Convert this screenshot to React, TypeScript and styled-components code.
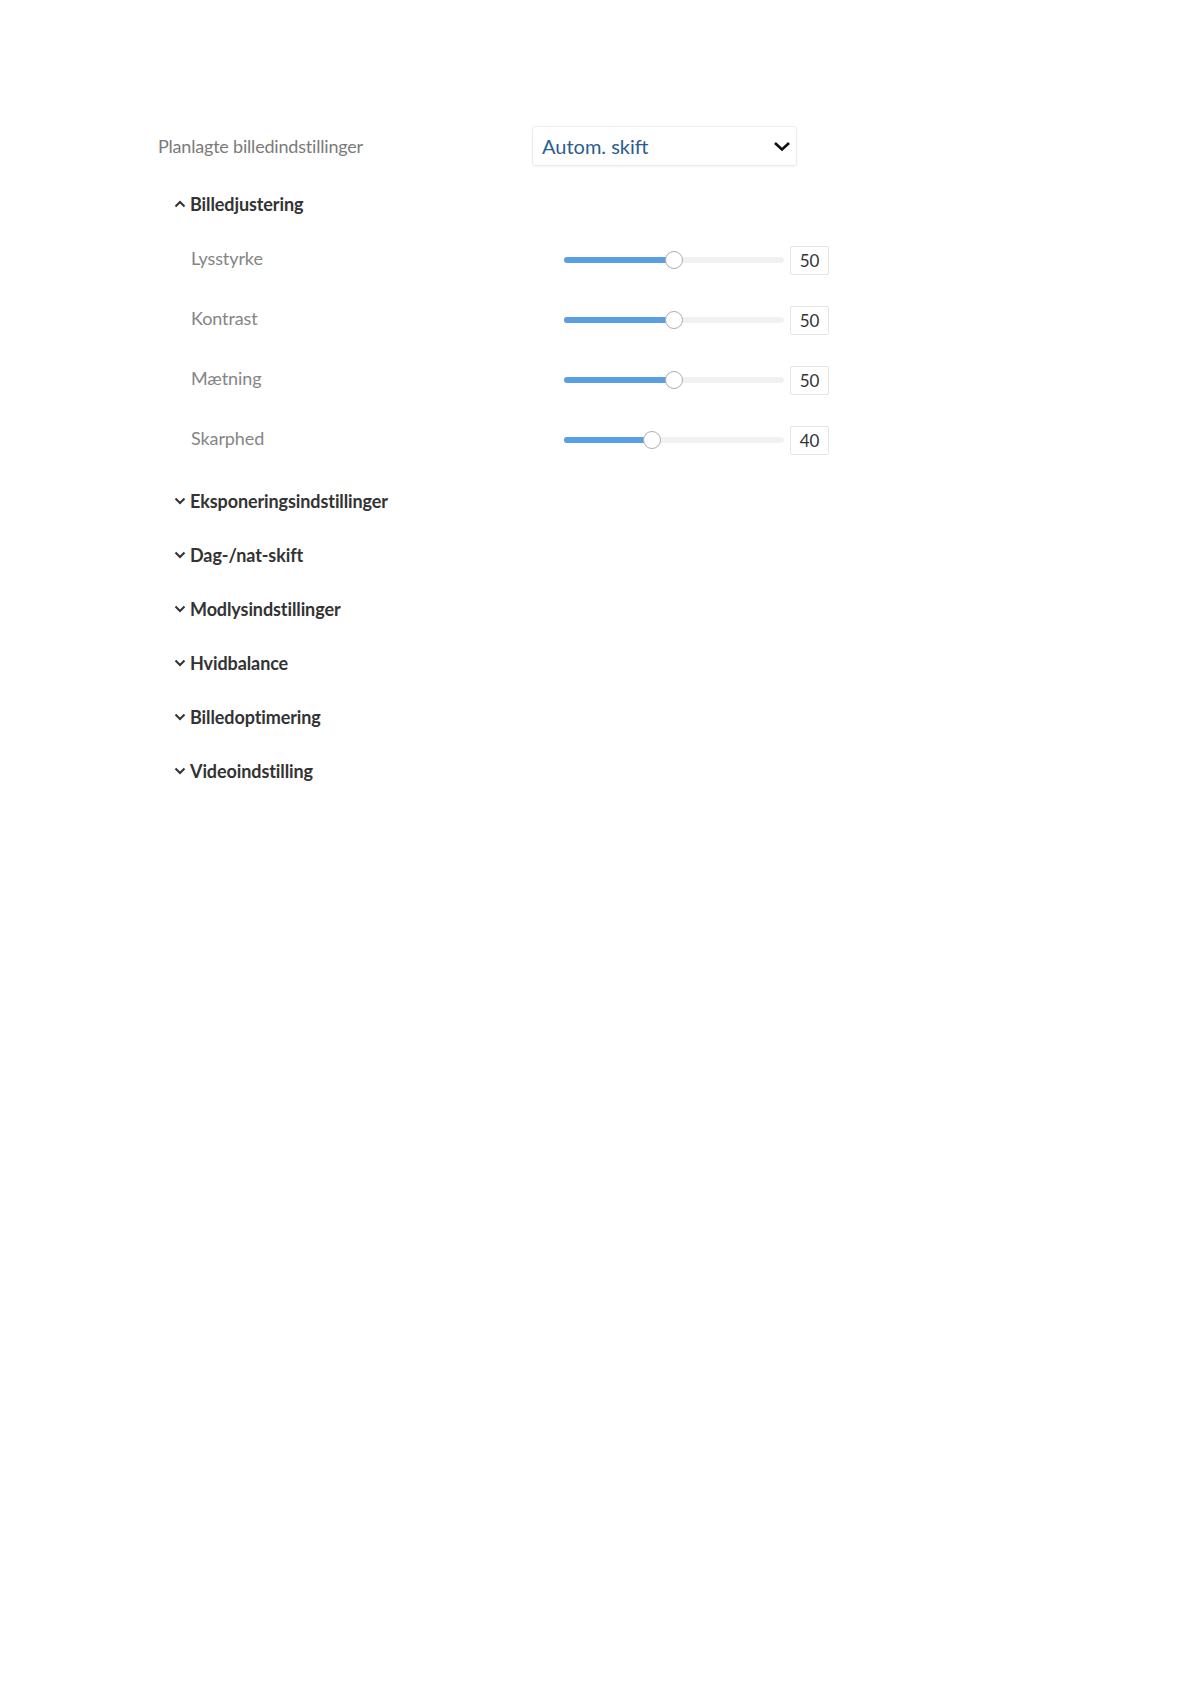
import React from "react";
import styled, { createGlobalStyle } from "styled-components";

const GlobalStyle = createGlobalStyle`
  body {
    margin: 0;
    background: #ffffff;
    font-family: Lato, "Open Sans", sans-serif;
  }
`;

const Page = styled.div`
  padding: 126px 0 0 158px;
  width: 700px;
`;

const TopRow = styled.div`
  display: flex;
  align-items: center;
  height: 40px;
`;

const TopLabel = styled.div`
  width: 374px;
  font-size: 18px;
  color: #7a7a7a;
  letter-spacing: -0.2px;
`;

const Select = styled.div`
  width: 265px;
  height: 40px;
  box-sizing: border-box;
  border: 1px solid #ececec;
  border-radius: 3px;
  box-shadow: 0 1px 2px rgba(0, 0, 0, 0.05);
  display: flex;
  align-items: center;
  justify-content: space-between;
  padding: 0 5px 0 9px;
  font-size: 20px;
  color: #2b5c92;
`;

const Group = styled.div`
  margin-top: 11px;
  margin-left: 16px;
`;

const Heading = styled.div`
  display: flex;
  align-items: center;
  gap: 4px;
  height: 54px;
  font-size: 18px;
  font-weight: 700;
  color: #333333;
  letter-spacing: -0.1px;
`;

const Rows = styled.div`
  margin-top: -1px;
  margin-bottom: 4px;
`;

const SliderRow = styled.div`
  display: flex;
  align-items: center;
  height: 60px;
  padding-left: 17px;
`;

const RowLabel = styled.div`
  width: 373px;
  font-size: 18px;
  color: #858585;
  letter-spacing: -0.1px;
  margin-top: -5px;
`;

const Track = styled.div`
  position: relative;
  width: 220px;
  height: 6px;
  border-radius: 3px;
  background: #eff1f3;
`;

const Fill = styled.div`
  position: absolute;
  left: 0;
  top: 0;
  bottom: 0;
  border-radius: 3px;
  background: #5b9fe3;
`;

const Thumb = styled.div`
  position: absolute;
  top: 50%;
  width: 18px;
  height: 18px;
  box-sizing: border-box;
  border-radius: 50%;
  background: #ffffff;
  border: 1px solid #a9adb2;
  transform: translate(-50%, -50%);
`;

const ValueBox = styled.div`
  margin-left: 6px;
  width: 39px;
  height: 29px;
  box-sizing: border-box;
  border: 1px solid #e4e4e4;
  border-radius: 2px;
  display: flex;
  align-items: center;
  justify-content: center;
  font-size: 17px;
  color: #333333;
`;

const Caret = ({ up }: { up?: boolean }) => (
  <svg width="12" height="8" viewBox="0 0 12 8">
    <path
      d={up ? "M1.5 6.5 L6 2 L10.5 6.5" : "M1.5 1.5 L6 6 L10.5 1.5"}
      fill="none"
      stroke="#333"
      strokeWidth="2"
    />
  </svg>
);

const sliders = [
  { label: "Lysstyrke", value: 50 },
  { label: "Kontrast", value: 50 },
  { label: "Mætning", value: 50 },
  { label: "Skarphed", value: 40 },
];

const collapsed = [
  "Eksponeringsindstillinger",
  "Dag-/nat-skift",
  "Modlysindstillinger",
  "Hvidbalance",
  "Billedoptimering",
  "Videoindstilling",
];

export default function App() {
  return (
    <>
      <GlobalStyle />
      <Page>
        <TopRow>
          <TopLabel>Planlagte billedindstillinger</TopLabel>
          <Select>
            <span>Autom. skift</span>
            <svg width="18" height="11" viewBox="0 0 18 11">
              <path d="M2 2 L9 8.5 L16 2" fill="none" stroke="#111" strokeWidth="2.6" />
            </svg>
          </Select>
        </TopRow>
        <Group>
          <Heading>
            <Caret up />
            Billedjustering
          </Heading>
          <Rows>
            {sliders.map((s) => (
              <SliderRow key={s.label}>
                <RowLabel>{s.label}</RowLabel>
                <Track>
                  <Fill style={{ width: `${s.value}%` }} />
                  <Thumb style={{ left: `${s.value}%` }} />
                </Track>
                <ValueBox>{s.value}</ValueBox>
              </SliderRow>
            ))}
          </Rows>
          {collapsed.map((h) => (
            <Heading key={h}>
              <Caret />
              {h}
            </Heading>
          ))}
        </Group>
      </Page>
    </>
  );
}
